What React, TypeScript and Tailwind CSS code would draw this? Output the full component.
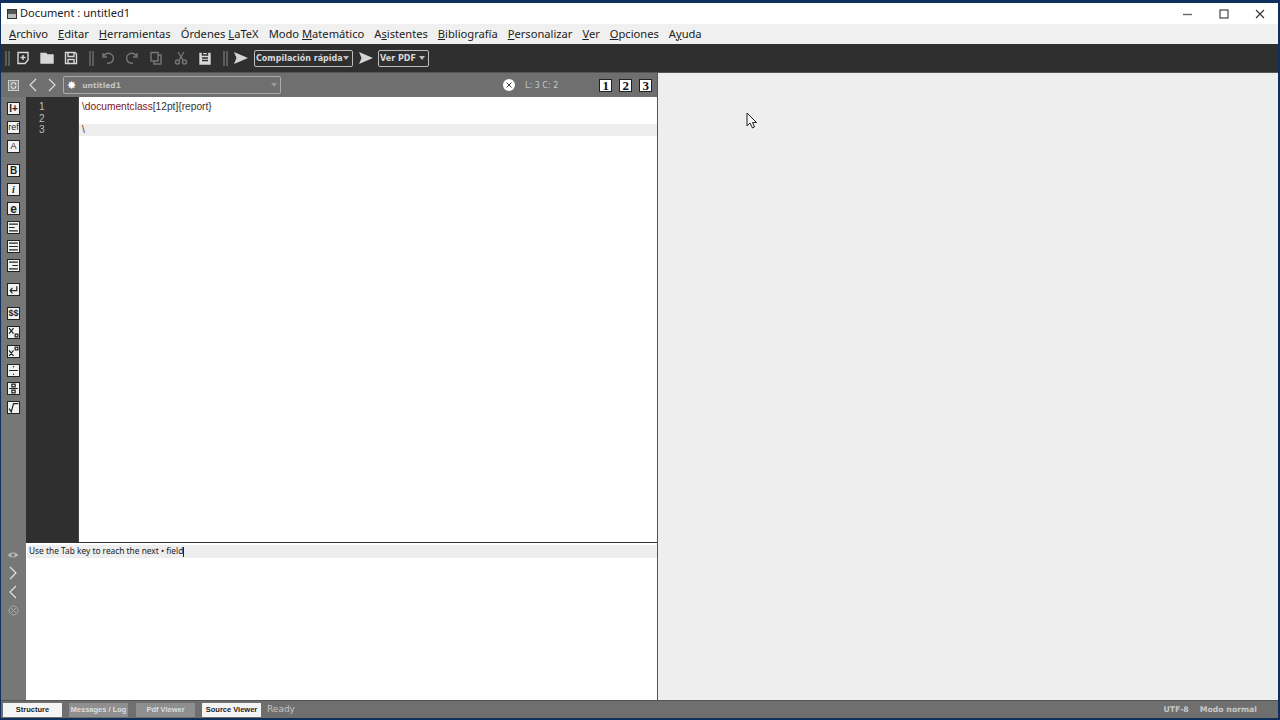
import type { ReactNode } from "react";

const menus: [string, string, string][] = [
  ["", "A", "rchivo"],
  ["", "E", "ditar"],
  ["", "H", "erramientas"],
  ["Órdenes ", "L", "aTeX"],
  ["Modo ", "M", "atemático"],
  ["A", "s", "istentes"],
  ["", "B", "ibliografía"],
  ["", "P", "ersonalizar"],
  ["", "V", "er"],
  ["", "O", "pciones"],
  ["A", "y", "uda"],
];

function Grip() {
  return (
    <div className="flex gap-[1px] h-[15px]">
      <div className="w-[2px] bg-[#5c5c5c]" />
      <div className="w-[2px] bg-[#5c5c5c]" />
    </div>
  );
}

function ToolIcon({ children, dim }: { children: ReactNode; dim?: boolean }) {
  return (
    <svg
      width="16"
      height="16"
      viewBox="0 0 16 16"
      fill="none"
      stroke={dim ? "#777" : "#d8d8d8"}
      strokeWidth="1.4"
      className="shrink-0"
    >
      {children}
    </svg>
  );
}

function Play() {
  return (
    <svg width="14" height="12" viewBox="0 0 14 12" className="shrink-0">
      <path d="M0 0 L14 6 L0 12 L2.5 6 Z" fill="#d4d4d4" />
    </svg>
  );
}

function Combo({ label, className }: { label: string; className: string }) {
  return (
    <div className={`h-[17px] border border-[#bdbdbd] rounded-[2px] flex items-center justify-between pl-[1px] pr-[3px] ${className}`}>
      <span className="pt-[1px] font-['DejaVu_Sans'] font-bold text-[8px] text-[#d8d8d8] whitespace-nowrap">{label}</span>
      <span className="w-0 h-0 border-l-[3px] border-r-[3px] border-t-[4px] border-l-transparent border-r-transparent border-t-[#bdbdbd]" />
    </div>
  );
}

function SideBtn({ children, className = "" }: { children: ReactNode; className?: string }) {
  return (
    <div className={`w-[13px] h-[13px] bg-[#f2f2f2] border border-[#222] flex items-center justify-center overflow-hidden text-[#222] leading-none ${className}`}>
      {children}
    </div>
  );
}

function Lines({ d }: { d: string }) {
  return (
    <svg width="11" height="11" viewBox="0 0 10 10" fill="none" stroke="#222" strokeWidth="1.1">
      <path d={d} />
    </svg>
  );
}

function PageBtn({ n }: { n: string }) {
  return (
    <div className="w-[13px] h-[13px] bg-white border border-[#222] flex items-center justify-center font-['Liberation_Serif'] font-bold text-[13px] leading-none text-[#111]">
      {n}
    </div>
  );
}

function Tab({ label, active, className }: { label: string; active?: boolean; className: string }) {
  return (
    <div
      className={`h-[14px] flex items-center justify-center font-['Liberation_Sans'] font-bold text-[7.5px] whitespace-nowrap ${className} ${
        active ? "bg-[#f4f4f4] text-[#222]" : "bg-[#8f8f8f] text-[#dedede]"
      }`}
    >
      {label}
    </div>
  );
}

export default function App() {
  return (
    <div className="w-[1280px] h-[720px] overflow-hidden flex flex-col bg-[#0f2f5c] pt-[3px] pb-[2px] pl-[1px] pr-[2px]">
      {/* title bar */}
      <div className="h-[21px] shrink-0 bg-white flex items-center font-['Noto_Sans',sans-serif] text-[11.1px] text-[#222]">
        <div className="ml-[6px] w-[10px] h-[10px] bg-[#555] border border-[#333] flex flex-col justify-end">
          <div className="h-[4px] bg-[#bbb]" />
        </div>
        <span className="ml-[3px]">Document : untitled1</span>
        <div className="ml-auto flex items-center text-[#333]">
          <svg width="12" height="12" viewBox="0 0 12 12" className="mr-[24px]">
            <path d="M1 6.5 H10" stroke="#666" strokeWidth="1.4" />
          </svg>
          <svg width="12" height="12" viewBox="0 0 12 12" className="mr-[24px]">
            <rect x="2" y="2" width="8" height="8" fill="none" stroke="#333" strokeWidth="1.1" />
          </svg>
          <svg width="12" height="12" viewBox="0 0 12 12" className="mr-[12px]">
            <path d="M2 2 L10 10 M10 2 L2 10" stroke="#333" strokeWidth="1.1" />
          </svg>
        </div>
      </div>

      {/* menu */}
      <div className="h-[20px] shrink-0 bg-[#f0f0f0] flex items-center pl-[8px] gap-[10px] font-['Noto_Sans',sans-serif] text-[11.15px] text-[#222]">
        {menus.map(([a, u, b]) => (
          <span key={a + u + b} className="whitespace-nowrap">
            {a}
            <span className="underline">{u}</span>
            {b}
          </span>
        ))}
      </div>

      {/* toolbar */}
      <div className="h-[28px] shrink-0 bg-[#2f2f2f] flex items-center pl-[4px]">
        <Grip />
        <div className="ml-[5px]">
          <ToolIcon>
            <path d="M3 2.5 H13 V10 L10 13.5 H3 Z M8 5 V10 M5.5 7.5 H10.5" />
          </ToolIcon>
        </div>
        <div className="ml-[8px]">
          <ToolIcon>
            <path d="M2 3.5 H7 L8 5 H14 V13 H2 Z" fill="#d8d8d8" />
          </ToolIcon>
        </div>
        <div className="ml-[8px]">
          <ToolIcon>
            <path d="M2.5 2.5 H12 L13.5 4 V13.5 H2.5 Z M5 2.5 V6.5 H11 V2.5 M5 13.5 V9.5 H11 V13.5" />
          </ToolIcon>
        </div>
        <div className="ml-[10px]">
          <Grip />
        </div>
        <div className="ml-[6px]">
          <ToolIcon dim>
            <path d="M3 3 V7 H7 M3.5 7 A5 5 0 1 1 7 13" />
          </ToolIcon>
        </div>
        <div className="ml-[8px]">
          <ToolIcon dim>
            <path d="M13 3 V7 H9 M12.5 7 A5 5 0 1 0 9 13" />
          </ToolIcon>
        </div>
        <div className="ml-[8px]">
          <ToolIcon dim>
            <path d="M3 2.5 H10 V11 H3 Z M10 5 H13 V14 H6 V11" />
          </ToolIcon>
        </div>
        <div className="ml-[9px]">
          <ToolIcon dim>
            <path d="M5 2 L10 10 M11 2 L6 10" />
            <circle cx="4.5" cy="12" r="2" />
            <circle cx="11.5" cy="12" r="2" />
          </ToolIcon>
        </div>
        <div className="ml-[8px]">
          <ToolIcon>
            <path d="M3 3.5 H13 V14 H3 Z" fill="#d8d8d8" />
            <path d="M5.5 2 H10.5 V5 H5.5 Z M5 8 H11 M5 10.5 H11" stroke="#2f2f2f" />
          </ToolIcon>
        </div>
        <div className="ml-[10px]">
          <Grip />
        </div>
        <div className="ml-[6px]">
          <Play />
        </div>
        <Combo label="Compilación rápida" className="ml-[6px] w-[99px]" />
        <div className="ml-[6px]">
          <Play />
        </div>
        <Combo label="Ver PDF" className="ml-[5px] w-[51px]" />
      </div>

      <div className="flex-1 flex min-h-0">
        {/* left pane */}
        <div className="w-[656px] shrink-0 flex flex-col">
          {/* tab strip */}
          <div className="h-[25px] shrink-0 bg-[#6f6f6f] border-t border-[#555] flex items-center">
            <div className="ml-[7px] w-[11px] h-[11px] border border-[#ccc] bg-[#8a8a8a] flex items-center justify-center">
              <svg width="7" height="7" viewBox="0 0 7 7" fill="none" stroke="#eee" strokeWidth="1">
                <path d="M1 3 A2.5 2.5 0 0 1 6 3 M6 4 A2.5 2.5 0 0 1 1 4" />
              </svg>
            </div>
            <svg width="10" height="14" viewBox="0 0 10 14" className="ml-[9px]" fill="none" stroke="#e2e2e2" strokeWidth="1.1">
              <path d="M8 1 L2 7 L8 13" />
            </svg>
            <svg width="10" height="14" viewBox="0 0 10 14" className="ml-[9px]" fill="none" stroke="#e2e2e2" strokeWidth="1.1">
              <path d="M2 1 L8 7 L2 13" />
            </svg>
            <div className="ml-[6px] w-[218px] h-[18px] border border-[#aaa] rounded-[2px] flex items-center">
              <span className="ml-[3px] text-[11px] leading-none text-white font-['DejaVu_Sans']">✸</span>
              <span className="ml-[6px] pt-[1px] font-['DejaVu_Sans'] font-bold text-[7.5px] text-[#c4c4c4]">untitled1</span>
              <span className="ml-auto mr-[3px] w-0 h-0 border-l-[3px] border-r-[3px] border-t-[4px] border-l-transparent border-r-transparent border-t-[#999]" />
            </div>
            <div className="ml-[222px] w-[12px] h-[12px] rounded-full bg-white flex items-center justify-center">
              <svg width="6" height="6" viewBox="0 0 6 6">
                <path d="M0.5 0.5 L5.5 5.5 M5.5 0.5 L0.5 5.5" stroke="#444" strokeWidth="1" />
              </svg>
            </div>
            <span className="ml-[10px] pt-[1px] font-['DejaVu_Sans'] text-[8px] text-[#c8c8c8] whitespace-nowrap">L: 3 C: 2</span>
            <div className="ml-[41px] flex gap-[7px]">
              <PageBtn n="1" />
              <PageBtn n="2" />
              <PageBtn n="3" />
            </div>
          </div>

          {/* editor area */}
          <div className="flex-1 min-h-0 flex">
            {/* side strip */}
            <div className="w-[25px] shrink-0 bg-[#777] flex flex-col items-center">
              <div className="h-[446px] flex flex-col items-center pt-[5px]">
                <SideBtn><span className="text-[10px] font-bold font-['Liberation_Sans']">I+</span></SideBtn>
                <SideBtn className="mt-[6px]"><span className="text-[9px] font-['Liberation_Sans']">ref</span></SideBtn>
                <SideBtn className="mt-[6px]"><span className="text-[9px] font-['Liberation_Sans']">A</span></SideBtn>
                <SideBtn className="mt-[11px]"><span className="text-[10px] font-bold font-['Liberation_Sans']">B</span></SideBtn>
                <SideBtn className="mt-[6px]"><span className="text-[10px] font-bold italic font-['Liberation_Serif']">i</span></SideBtn>
                <SideBtn className="mt-[6px]"><span className="text-[12px] font-bold font-['Liberation_Sans']">e</span></SideBtn>
                <SideBtn className="mt-[6px]"><Lines d="M1 2 H9 M1 5 H6 M1 8 H9" /></SideBtn>
                <SideBtn className="mt-[6px]"><Lines d="M1 2 H9 M1 5 H9 M1 8 H9" /></SideBtn>
                <SideBtn className="mt-[6px]"><Lines d="M1 2 H9 M4 5 H9 M1 8 H9" /></SideBtn>
                <SideBtn className="mt-[11px]"><Lines d="M8 2 V6 H2 M4 3.5 L2 6 L4 8.5" /></SideBtn>
                <SideBtn className="mt-[11px]"><span className="text-[9px] font-bold font-['Liberation_Sans']">$$</span></SideBtn>
                <SideBtn className="mt-[6px]"><Lines d="M1 1 L5 6 M5 1 L1 6 M6.5 6.5 H9 V9 H6.5 Z" /></SideBtn>
                <SideBtn className="mt-[6px]"><Lines d="M1 4 L5 9 M5 4 L1 9 M6.5 1 H9 V3.5 H6.5 Z" /></SideBtn>
                <SideBtn className="mt-[6px]"><Lines d="M1 5 H9 M4.5 1.5 H5.5 M4.5 8.5 H5.5" /></SideBtn>
                <SideBtn className="mt-[5px]"><Lines d="M1 5 H9 M3.5 1 H6.5 V3.5 H3.5 Z M3.5 6.5 H6.5 V9 H3.5 Z" /></SideBtn>
                <SideBtn className="mt-[6px]"><Lines d="M1 6 L3 9 L5 1.5 H9.5" /></SideBtn>
              </div>
              <div className="flex flex-col items-center pt-[8px] pr-[1px]">
                <svg width="12" height="8" viewBox="0 0 12 8">
                  <path d="M0.5 4 Q6 -1.5 11.5 4 Q6 9 0.5 4 Z" fill="#b8b8b8" />
                  <circle cx="6" cy="4" r="1.7" fill="#777" />
                </svg>
                <svg width="10" height="14" viewBox="0 0 10 14" className="mt-[7px]" fill="none" stroke="#e6e6e6" strokeWidth="1.1">
                  <path d="M2 1 L8 7 L2 13" />
                </svg>
                <svg width="10" height="14" viewBox="0 0 10 14" className="mt-[5px]" fill="none" stroke="#e6e6e6" strokeWidth="1.1">
                  <path d="M8 1 L2 7 L8 13" />
                </svg>
                <svg width="11" height="11" viewBox="0 0 11 11" className="mt-[6px]" fill="none" stroke="#a8a8a8" strokeWidth="1">
                  <circle cx="5.5" cy="5.5" r="4.5" />
                  <path d="M3 3 L8 8 M8 3 L3 8" />
                </svg>
              </div>
            </div>

            <div className="flex-1 min-w-0 flex flex-col">
              {/* gutter + text */}
              <div className="h-[446px] shrink-0 flex border-b border-[#333]">
                <div className="w-[52px] shrink-0 bg-[#2f2f2f] pt-[4px] pl-[13px] font-['Liberation_Sans'] text-[10.2px] text-[#bdbdbd] leading-[11.7px]">
                  <div>1</div>
                  <div>2</div>
                  <div>3</div>
                </div>
                <div className="flex-1 min-w-0 bg-white border-l border-[#444] pt-[4px] font-['Liberation_Sans'] text-[10.2px] leading-[11.7px]">
                  <div className="pl-[3px]">
                    <span className="text-[#7f1414]">\documentclass</span>
                    <span className="text-[#333]">[12pt]{"{report}"}</span>
                  </div>
                  <div className="h-[11.7px]" />
                  <div className="bg-[#eeeeee] h-[12px] pl-[3px] text-[#7f1414]">\</div>
                </div>
              </div>
              {/* log */}
              <div className="flex-1 min-h-0 bg-white pt-[2px]">
                <div className="h-[13px] bg-[#eeeeee] ml-[1px] pl-[2px] flex items-center font-['Noto_Sans',sans-serif] text-[8.35px] text-[#222]">
                  <span>Use the Tab key to reach the next • field</span>
                  <span className="w-px h-[10px] bg-[#222]" />
                </div>
              </div>
            </div>
          </div>
        </div>

        {/* pdf pane */}
        <div className="flex-1 min-w-0 bg-[#eeeeee] border-l border-[#555] border-t border-t-[#555] relative">
          <svg width="13" height="18" viewBox="0 0 13 18" className="absolute left-[88px] top-[39px]">
            <path d="M1 1 V14 L4 11 L6.5 16 L8.5 15 L6.5 10.5 H10.5 Z" fill="#f4f4f4" stroke="#222" strokeWidth="1" />
          </svg>
        </div>
      </div>

      {/* status bar */}
      <div className="h-[18px] shrink-0 bg-[#6f6f6f] border-t border-[#555] flex items-center pt-[1px]">
        <Tab label="Structure" active className="ml-[2px] w-[59px]" />
        <Tab label="Messages / Log" className="ml-[7px] w-[59px]" />
        <Tab label="Pdf Viewer" className="ml-[8px] w-[59px]" />
        <Tab label="Source Viewer" active className="ml-[7px] w-[59px]" />
        <span className="ml-[6px] font-['DejaVu_Sans'] text-[9px] text-[#c4c4c4]">Ready</span>
        <span className="ml-auto font-['DejaVu_Sans'] font-bold text-[7.75px] text-[#c8c8c8]">UTF-8</span>
        <span className="ml-[11px] mr-[21px] font-['DejaVu_Sans'] font-bold text-[7.75px] text-[#c8c8c8]">Modo normal</span>
      </div>
    </div>
  );
}
